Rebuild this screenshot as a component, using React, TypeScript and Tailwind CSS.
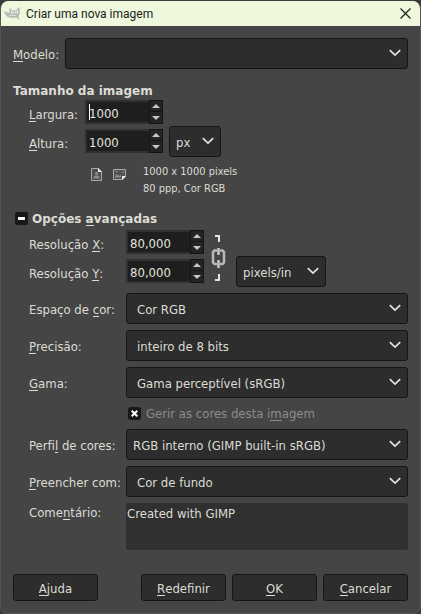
import type { ReactNode } from 'react'

function Key({ children }: { children: ReactNode }) {
  return <span className="border-b border-[#dcdcd4] leading-none inline-block">{children}</span>
}

type DropProps = { id: string; value: string; className?: string; indent?: string; label?: string }

function Drop({ id, value, className = '', indent = 'pl-[10px]', label }: DropProps) {
  return (
    <div className={`relative h-[31px] ${className}`}>
      <select
        id={id}
        aria-label={label}
        defaultValue={value}
        className={`block size-full appearance-none rounded-[3px] border border-[#151515] bg-[#2d2d2d] ${indent} pr-6 pt-[2px] text-[13px] text-[#dcdcd4] outline-none`}
      >
        <option value={value}>{value}</option>
      </select>
      <svg className="pointer-events-none absolute right-[7px] top-[11px] h-[8px] w-[12px]" viewBox="0 0 12 8" fill="none">
        <path d="M0.8 1.2L6 6L11.2 1.2" stroke="#e4e4e4" strokeWidth="1.7" />
      </svg>
    </div>
  )
}

type SpinProps = { id: string; value: string; caret?: boolean }

function Spin({ id, value, caret }: SpinProps) {
  return (
    <div className="relative flex h-6 w-[78px] bg-[#303030]">
      <input
        id={id}
        type="text"
        inputMode="decimal"
        defaultValue={value}
        className="my-[2px] ml-[2px] min-w-0 flex-1 bg-[#1e1e1e] pl-[2px] pt-[3px] text-[13px] text-[#e4e4dc] outline-none"
      />
      {caret && <span className="absolute left-[4px] top-[4px] h-4 w-px bg-white" />}
      <div className="flex w-[14px] flex-col">
        <button aria-label="Aumentar" className="flex h-3 items-center justify-center border border-[#141414] bg-[#242424]">
          <svg className="h-[4px] w-[8px]" viewBox="0 0 8 4"><path d="M0 4L4 0L8 4Z" fill="#c8c8c8" /></svg>
        </button>
        <button aria-label="Diminuir" className="flex h-3 items-center justify-center border border-t-0 border-[#141414] bg-[#242424]">
          <svg className="h-[4px] w-[8px]" viewBox="0 0 8 4"><path d="M0 0L4 4L8 0Z" fill="#c8c8c8" /></svg>
        </button>
      </div>
    </div>
  )
}

function Row({ id, label, children }: { id: string; label: ReactNode; children: ReactNode }) {
  return (
    <div className="flex">
      <label htmlFor={id} className="w-[97px] shrink-0 pt-[7px] leading-5">{label}</label>
      {children}
    </div>
  )
}

function Action({ children }: { children: ReactNode }) {
  return (
    <button className="h-[27px] w-[85px] rounded-[3px] border border-[#151515] bg-[#2d2d2d] pt-[2px] text-[13px] leading-5">
      {children}
    </button>
  )
}

export default function App() {
  return (
    <div className="min-h-screen bg-[#3a3a3a] pt-px">
      <div className="overflow-hidden rounded-lg border-x border-b border-[#555555] bg-[#454545] font-['DejaVu_Sans_Condensed','Noto_Sans',sans-serif] text-[13px] text-[#dcdcd4]">
        <header className="flex h-[25px] items-center bg-[#eef8dc] pl-[3px] pr-[9px] text-[#1c1c1c]">
          <svg className="h-[14px] w-[17px]" viewBox="0 0 17 14">
            <path d="M0 4L5 6L5.500 1L8 3H12L15.500 0L16 6L14.500 9L15.500 13L12 10.500L7 11L3 9.500L1 7Z" fill="#b9b9b5" />
            <circle cx="8.500" cy="5" r="1.800" fill="#f3f6ea" />
            <circle cx="12.500" cy="5" r="1.800" fill="#f3f6ea" />
            <circle cx="8.800" cy="5" r="0.700" fill="#88888c" />
            <circle cx="12.200" cy="5" r="0.700" fill="#88888c" />
            <path d="M5 8.500L12 8.500" stroke="#e4e8dc" strokeWidth="0.800" />
          </svg>
          <h1 className="ml-[5px] flex-1 font-['Roboto',sans-serif] text-[12px]">Criar uma nova imagem</h1>
          <button aria-label="Fechar">
            <svg className="size-[11px]" viewBox="0 0 11 11"><path d="M0.500 0.500L10.500 10.500M10.500 0.500L0.500 10.500" stroke="#1c1c1c" strokeWidth="1.200" /></svg>
          </button>
        </header>

        <main className="px-3 pb-3 pt-3">
          <div className="flex">
            <label htmlFor="template" className="w-[52px] shrink-0 pt-[7px] leading-5"><Key>M</Key>odelo:</label>
            <Drop id="template" value="" className="flex-1" />
          </div>

          <h2 className="flex h-[31px] items-center pt-3 font-['DejaVu_Sans',sans-serif] text-[12px] font-bold">Tamanho da imagem</h2>

          <div className="ml-4 flex h-[57px]">
            <div className="flex flex-col gap-[5px]">
              <div className="flex">
                <label htmlFor="width" className="w-14 pt-[5px] leading-[19px]"><Key>L</Key>argura:</label>
                <Spin id="width" value="1000" caret />
              </div>
              <div className="flex">
                <label htmlFor="height" className="w-14 pt-[5px] leading-[19px]"><Key>A</Key>ltura:</label>
                <Spin id="height" value="1000" />
              </div>
            </div>
            <Drop id="unit" label="Unidade" value="px" indent="pl-[6px]" className="ml-[6px] w-[52px] self-end" />
          </div>

          <div className="ml-[78px] flex pt-[6px]">
            <button aria-label="Retrato" className="mt-[5px] h-[13px]">
              <svg className="h-[13px] w-[11px]" viewBox="0 0 11 13">
                <path d="M0.500 0.500H7.500L10.500 3.500V12.500H0.500Z" fill="#505050" stroke="#a9a9a9" />
                <path d="M7 0V4H11Z" fill="#e8e8e8" />
                <circle cx="5.500" cy="5.500" r="1.500" fill="#8c8c8c" />
                <path d="M2.500 10.500V9L4 7.500H7L8.500 9V10.500Z" fill="#8c8c8c" />
              </svg>
            </button>
            <button aria-label="Paisagem" className="ml-[11px] mt-[5px] h-[13px]">
              <svg className="h-[13px] w-[13px]" viewBox="0 0 13 13">
                <path d="M0.500 1.500H12.500V8.500L9.500 11.500H0.500Z" fill="#505050" stroke="#a9a9a9" />
                <path d="M9 12V8H13Z" fill="#e8e8e8" />
                <path d="M2 9.500V8L4 6L6 8L8 7V9.500Z" fill="#8c8c8c" />
                <path d="M2.500 3.500H4.500M9 4.500L11 4" stroke="#9a9a9a" fill="none" />
              </svg>
            </button>
            <p className="ml-[17px] text-[11px] leading-[17px]">
              1000 x 1000 pixels
              <br />
              80 ppp, Cor RGB
            </p>
          </div>

          <h2 className="flex h-[33px] items-center pt-[10px] font-['DejaVu_Sans',sans-serif] text-[12px] font-bold">
            <button className="flex items-center" aria-expanded="true">
              <span className="ml-[2px] mr-1 flex size-[13px] items-center justify-center rounded-[2px] bg-[#181818]">
                <span className="h-[3px] w-[7px] bg-white" />
              </span>
              <span>Opções <Key>a</Key>vançadas</span>
            </button>
          </h2>

          <div className="ml-4 flex flex-col gap-[6px]">
            <div className="flex h-[57px]">
              <div className="flex flex-col gap-[5px]">
                <div className="flex">
                  <label htmlFor="resx" className="w-[97px] pt-[5px] leading-[19px]">Resolução <Key>X</Key>:</label>
                  <Spin id="resx" value="80,000" />
                </div>
                <div className="flex">
                  <label htmlFor="resy" className="w-[97px] pt-[5px] leading-[19px]">Resolução <Key>Y</Key>:</label>
                  <Spin id="resy" value="80,000" />
                </div>
              </div>
              <button aria-label="Ligar resoluções" className="w-8">
                <svg className="h-[57px] w-8" viewBox="0 0 32 57" fill="none">
                  <path d="M11 6H15V12M15 44V50H11" stroke="#e4e4e4" strokeWidth="2" />
                  <path d="M13 20.500H10.500L9 22V32.500L10.500 34H13M16 20.500H18.500L20 22V32.500L18.500 34H16" stroke="#b8b8b8" strokeWidth="2.500" />
                  <path d="M14.500 18V25M14.500 30V38" stroke="#c8c8c8" strokeWidth="2.500" />
                </svg>
              </button>
              <Drop id="resunit" label="Unidade de resolução" value="pixels/in" indent="pl-[6px]" className="w-[90px] self-end" />
            </div>

            <Row id="space" label={<>Espaço de <Key>c</Key>or:</>}><Drop id="space" value="Cor RGB" className="flex-1" /></Row>
            <Row id="precision" label={<><Key>P</Key>recisão:</>}><Drop id="precision" value="inteiro de 8 bits" className="flex-1" /></Row>
            <Row id="gamma" label={<><Key>G</Key>ama:</>}><Drop id="gamma" value="Gama perceptível (sRGB)" className="flex-1" /></Row>

            <div className="-my-[6px] ml-[99px] flex h-[31px] items-center gap-[5px] text-[#8c8c88]">
              <span className="relative size-[13px]">
                <input id="manage" type="checkbox" defaultChecked className="block size-[13px] appearance-none rounded-[3px] bg-[#181818]" />
                <svg className="pointer-events-none absolute left-[3px] top-[3px] size-[7px]" viewBox="0 0 7 7"><path d="M0.700 0.700L6.300 6.300M6.300 0.700L0.700 6.300" stroke="#fff" strokeWidth="2" /></svg>
              </span>
              <label htmlFor="manage" className="pt-px">Gerir as cores desta i<span className="inline-block border-b border-[#8c8c88] leading-none">m</span>agem</label>
            </div>

            <Row id="profile" label={<>Perfi<Key>l</Key> de cores:</>}><Drop id="profile" value="RGB interno (GIMP built-in sRGB)" indent="pl-[6px]" className="flex-1" /></Row>
            <Row id="fill" label={<><Key>P</Key>reencher com:</>}><Drop id="fill" value="Cor de fundo" className="flex-1" /></Row>
            <div className="flex">
              <label htmlFor="comment" className="w-[97px] shrink-0 leading-5">Come<Key>n</Key>tário:</label>
              <textarea id="comment" defaultValue="Created with GIMP" className="h-[47px] min-w-0 flex-1 resize-none rounded-[2px] bg-[#303030] pl-px pt-px leading-5 outline-none" />
            </div>
          </div>

          <footer className="mt-6 flex gap-[6px]">
            <Action><Key>A</Key>juda</Action>
            <span className="flex-1" />
            <Action><Key>R</Key>edefinir</Action>
            <Action><Key>O</Key>K</Action>
            <Action><Key>C</Key>ancelar</Action>
          </footer>
        </main>
      </div>
    </div>
  )
}
